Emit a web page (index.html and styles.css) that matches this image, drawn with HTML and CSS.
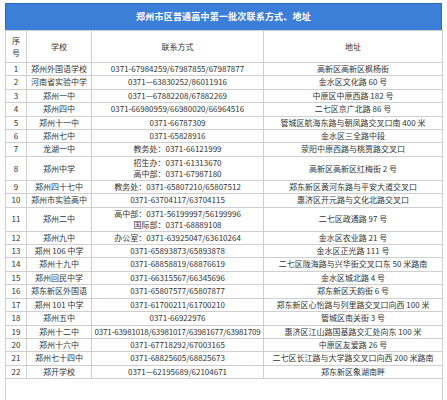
FILE: index.html
```html
<!DOCTYPE html>
<html lang="zh-CN">
<head>
<meta charset="utf-8">
<title>郑州市区普通高中第一批次联系方式、地址</title>
<link rel="stylesheet" href="styles.css">
</head>
<body>
<div class="sheet">
  <div class="title">郑州市区普通高中第一批次联系方式、地址</div>
  <table class="grid">
    <colgroup>
      <col class="c-no"><col class="c-school"><col class="c-contact"><col class="c-addr">
    </colgroup>
    <thead>
      <tr class="head"><th>序<br>号</th><th>学校</th><th>联系方式</th><th>地址</th></tr>
    </thead>
    <tbody>
      <tr><td>1</td><td>郑州外国语学校</td><td>0371-67984259/67987855/67987877</td><td>高新区高新区枫杨街</td></tr>
      <tr><td>2</td><td>河南省实验中学</td><td>0371—63830252/86011916</td><td>金水区文化路 60 号</td></tr>
      <tr><td>3</td><td>郑州一中</td><td>0371—67882208/67882269</td><td>中原区中原西路 182 号</td></tr>
      <tr><td>4</td><td>郑州四中</td><td>0371-66980959/66980020/66964516</td><td>二七区京广北路 86 号</td></tr>
      <tr><td>5</td><td>郑州十一中</td><td>0371-66787309</td><td>管城区航海东路与朝凤路交叉口南 400 米</td></tr>
      <tr><td>6</td><td>郑州七中</td><td>0371-65828916</td><td>金水区三全路中段</td></tr>
      <tr><td>7</td><td>龙湖一中</td><td>教务处：0371-66121999</td><td>荥阳中原西路与桃贾路交叉口</td></tr>
      <tr class="double"><td>8</td><td>郑州中学</td><td>招生办：0371-61313670<br>高中部：0371-67987180</td><td>高新区高新区红梅街 2 号</td></tr>
      <tr><td>9</td><td>郑州四十七中</td><td>教务处：0371-65807210/65807512</td><td>郑东新区黄河东路与平安大道交叉口</td></tr>
      <tr><td>10</td><td>郑州市实验高中</td><td>0371-63704117/63704115</td><td>惠济区开元路与文化北路交叉口</td></tr>
      <tr class="double"><td>11</td><td>郑州二中</td><td>高中部：0371-56199997/56199996<br>国际部：0371-68889108</td><td>二七区政通路 97 号</td></tr>
      <tr><td>12</td><td>郑州九中</td><td>办公室：0371-63925047/63610264</td><td>金水区农业路 21 号</td></tr>
      <tr><td>13</td><td>郑州 106 中学</td><td>0371-65893873/65893878</td><td>金水区正光路 111 号</td></tr>
      <tr><td>14</td><td>郑州十九中</td><td>0371-68858819/68876619</td><td>二七区陇海路与兴华街交叉口东 50 米路南</td></tr>
      <tr><td>15</td><td>郑州回民中学</td><td>0371-66315567/66345696</td><td>金水区城北路 4 号</td></tr>
      <tr><td>16</td><td>郑东新区外国语</td><td>0371-65807577/65807877</td><td>郑东新区天韵街 6 号</td></tr>
      <tr><td>17</td><td>郑州 101 中学</td><td>0371-61700211/61700210</td><td>郑东新区心怡路与列里路交叉口向西 100 米</td></tr>
      <tr><td>18</td><td>郑州五中</td><td>0371-66922976</td><td>管城区南关街 3 号</td></tr>
      <tr><td>19</td><td>郑州十二中</td><td class="tight">0371-63981018/63981017/63981677/63981709</td><td>惠济区江山路国基路交汇处向东 100 米</td></tr>
      <tr><td>20</td><td>郑州十六中</td><td>0371-67718292/67003165</td><td>中原区友爱路 26 号</td></tr>
      <tr><td>21</td><td>郑州七十四中</td><td>0371-68825605/68825673</td><td>二七区长江路与大学路交叉口向西 200 米路南</td></tr>
      <tr><td>22</td><td>郑开学校</td><td>0371—62195689/62104671</td><td>郑东新区象湖南畔</td></tr>
      <tr class="note"><td colspan="4"></td></tr>
    </tbody>
  </table>
</div>
</body>
</html>
```
FILE: styles.css
```css
html, body {
  margin: 0;
  padding: 0;
  background: #ffffff;
}
body {
  font-family: "Noto Sans CJK SC", "Noto Sans", sans-serif;
  color: #333333;
}
.sheet {
  width: 437px;
  padding: 3px 5px 0 5px;
}
.title {
  height: 26px;
  line-height: 26px;
  background: #3c7fd8;
  border: 1px solid #2c69bd;
  border-bottom: none;
  color: #ffffff;
  font-weight: bold;
  font-size: 9px;
  text-align: center;
  letter-spacing: 0.2px;
}
.grid {
  width: 437px;
  border-collapse: collapse;
  table-layout: fixed;
  font-size: 8px;
}
.c-no { width: 21px; }
.c-school { width: 65px; }
.c-contact { width: 172px; }
.c-addr { width: 179px; }
.grid th,
.grid td {
  border: 1px solid #cfcfcf;
  padding: 0;
  text-align: center;
  vertical-align: middle;
  white-space: nowrap;
  overflow: hidden;
  font-weight: normal;
  height: 12.4px;
  line-height: 12.4px;
}
.grid .head th {
  height: 31px;
  line-height: 12px;
}
.grid .double td {
  height: 23px;
  line-height: 11.5px;
}
.grid td.tight {
  letter-spacing: -0.15px;
}
.grid .note td {
  height: 30px;
}
```
